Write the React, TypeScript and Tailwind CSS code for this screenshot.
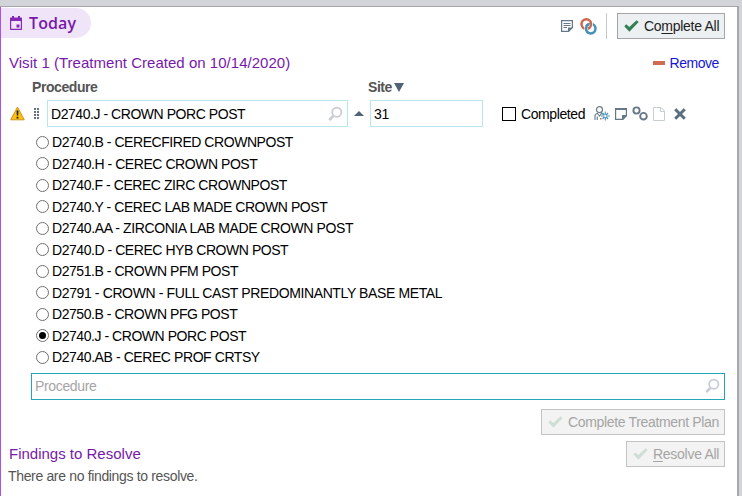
import React from "react";

const procedures: { label: string; spacing: string }[] = [
  { label: "D2740.B - CERECFIRED CROWNPOST", spacing: "tracking-[-0.45px]" },
  { label: "D2740.H - CEREC CROWN POST", spacing: "tracking-[-0.45px]" },
  { label: "D2740.F - CEREC ZIRC CROWNPOST", spacing: "tracking-[-0.44px]" },
  { label: "D2740.Y - CEREC LAB MADE CROWN POST", spacing: "tracking-[-0.44px]" },
  { label: "D2740.AA - ZIRCONIA LAB MADE CROWN POST", spacing: "tracking-[-0.4px]" },
  { label: "D2740.D - CEREC HYB CROWN POST", spacing: "tracking-[-0.45px]" },
  { label: "D2751.B - CROWN PFM POST", spacing: "tracking-[-0.45px]" },
  { label: "D2791 - CROWN - FULL CAST PREDOMINANTLY BASE METAL", spacing: "tracking-[-0.38px]" },
  { label: "D2750.B - CROWN PFG POST", spacing: "tracking-[-0.45px]" },
  { label: "D2740.J - CROWN PORC POST", spacing: "tracking-[-0.45px]" },
  { label: "D2740.AB - CEREC PROF CRTSY", spacing: "tracking-[-0.42px]" },
];

function Check({ color }: { color: string }) {
  return (
    <svg width="15" height="12" viewBox="0 0 15 12" className="shrink-0">
      <path d="M0.3 6.3 2.3 4.3 5.3 7 12.6 0.3 14.7 2 5.4 11.7Z" fill={color} />
    </svg>
  );
}

function SearchIcon() {
  return (
    <svg width="15" height="16" viewBox="0 0 15 16" fill="none" stroke="#c8ccd4" className="shrink-0">
      <circle cx="8.8" cy="6.2" r="4.6" strokeWidth="1.8" />
      <path d="M5.2 10 1.3 14.2" strokeWidth="2.6" />
    </svg>
  );
}

function CalendarIcon() {
  return (
    <svg width="12" height="14" viewBox="0 0 12 14" className="shrink-0" fill="#8528b8">
      <path d="M2 0h2v1.5h4V0h2v1.5h1.2q.8 0 .8.8V13.2q0 .8-.8.8H.8q-.8 0-.8-.8V2.3q0-.8.8-.8H2ZM1.2 5v7.8h9.6V5Z" fillRule="evenodd" />
      <path d="M6.5 8.5h3v3h-3z" />
    </svg>
  );
}

function NoteIcon() {
  return (
    <svg width="12" height="12" viewBox="0 0 12 12" className="shrink-0">
      <path d="M.6.6h10.8v6.9L7.5 11.4H.6Z" fill="none" stroke="#65788a" strokeWidth="1.2" />
      <path d="M7 7.5h5L7.5 12H7Z" fill="#65788a" />
      <path d="M2.5 3.5h7M2.5 5.5h7M2.5 7.5h3.5" stroke="#65788a" />
    </svg>
  );
}

function LinkIcon() {
  return (
    <svg width="17" height="17" viewBox="0 0 17 17" fill="none" strokeWidth="2.5" className="shrink-0">
      <circle cx="10.7" cy="10.6" r="4.8" stroke="#4690b8" />
      <path d="M11.2 3.5a5 5 0 0 1-.5 4.5" stroke="#fff" strokeWidth="3.2" />
      <circle cx="6.3" cy="6.1" r="4.8" stroke="#cf6650" />
      <path d="M6.9 13.5A4.8 4.8 0 0 1 6.3 8.6" stroke="#fff" strokeWidth="3.4" />
      <path d="M8 14.57A4.8 4.8 0 0 1 8.3 6.44" stroke="#4690b8" />
    </svg>
  );
}

function PersonStarIcon() {
  return (
    <svg width="16" height="15" viewBox="0 0 16 15" fill="none" className="shrink-0">
      <circle cx="5.5" cy="3.7" r="3" stroke="#71808e" strokeWidth="1.3" />
      <path d="M1 14V10q0-2 2.8-3M7.2 7l1.8 1.2M3.3 14V10.5M3.5 7.5 5.5 10l2-2.5" stroke="#71808e" strokeWidth="1.2" />
      <path d="M11.3 5.5v9M7 10h8.8M8.500 7l5.600 6M14.100 7l-5.600 6" stroke="#4690b8" strokeWidth="1.1" />
      <circle cx="11.3" cy="10" r="1.2" fill="#fff" />
      <path d="M6 12h1.5v1.5H6z" fill="#c96a55" />
    </svg>
  );
}

function StickyIcon() {
  return (
    <svg width="12" height="12" viewBox="0 0 12 12" className="shrink-0">
      <path d="M.6 1h10.8v6.5L7.5 11.4H.6Z" fill="none" stroke="#65788a" strokeWidth="1.2" />
      <path d="M0 0h12v2H0zM7 7h5v1l-4 4H7Z" fill="#65788a" />
    </svg>
  );
}

function RingsIcon() {
  return (
    <svg width="16" height="15" viewBox="0 0 16 15" fill="none" stroke="#65788a" strokeWidth="1.9" className="shrink-0">
      <circle cx="4.5" cy="4.5" r="3.1" />
      <circle cx="11.5" cy="10.2" r="3.3" />
    </svg>
  );
}

function PageIcon() {
  return (
    <svg width="12" height="14" viewBox="0 0 12 14" fill="none" stroke="#c8cdd3" className="shrink-0">
      <path d="M.5.5h7.5l3.5 3.5v9.5H.5ZM7.5.5v4h4" />
    </svg>
  );
}

function CloseIcon() {
  return (
    <svg width="12" height="12" viewBox="0 0 12 12" stroke="#5a6e81" strokeWidth="3" className="shrink-0">
      <path d="m1.2 1.2 9.6 9.6M10.8 1.2l-9.6 9.6" />
    </svg>
  );
}

function WarningIcon() {
  return (
    <svg width="15" height="15" viewBox="0 0 15 15" className="shrink-0">
      <path d="M7.5 1 14.3 13.8H.7Z" fill="#fcc010" stroke="#cf921c" strokeLinejoin="round" />
      <path d="M6.5 4.5h2L8.2 9.5H6.8ZM6.6 10.7h1.8v1.8H6.6z" fill="#222" />
    </svg>
  );
}

function DragHandle() {
  return (
    <div className="grid w-[5px] grid-cols-2 gap-px">
      {Array.from({ length: 8 }, (_, i) => (
        <span key={i} className="h-[2px] w-[2px] bg-[#63707d]" />
      ))}
    </div>
  );
}

export default function App() {
  return (
    <div className="h-[496px] w-[742px] overflow-hidden bg-[#d3d4da] pt-[6px] font-['Liberation_Sans',Arial,sans-serif] text-[14px] leading-4 text-black">
      <main className="h-[490px] w-[739px] border-t border-r-2 border-t-[#a6a6a9] border-r-[#a8a8ac] bg-white">
        <div className="h-full border-l border-[#a84ff5] pt-px">
          <header className="flex h-[32px] items-start">
            <div className="flex h-[30px] w-[90px] items-center rounded-r-full bg-[#f0e4f8] pl-[9px]">
              <CalendarIcon />
              <h1 className="ml-[7px] font-['Open_Sans',sans-serif] text-[16px] leading-5 font-semibold tracking-[0.1px] text-[#7719aa]">Today</h1>
            </div>
            <div className="mt-[5px] ml-[470px] flex h-[26px] items-center">
              <NoteIcon />
              <span className="ml-[7px] flex"><LinkIcon /></span>
              <span className="ml-[9px] h-[26px] w-px bg-[#c8c8c8]" />
            </div>
            <button className="mt-[5px] ml-[10px] flex h-[26px] w-[108px] items-center border border-[#a5a5a5] bg-[#edf0f2] pl-[6px] tracking-[-0.28px] text-[#222]">
              <Check color="#318055" />
              <span className="ml-[5px] whitespace-nowrap">Co<u className="underline-offset-2">m</u>plete All</span>
            </button>
          </header>

          <div className="mt-[13px] flex h-[20px] items-center pl-[8px]">
            <h2 className="w-[644px] text-[15px] tracking-[0.025px] whitespace-nowrap text-[#7719aa]">Visit 1 (Treatment Created on 10/14/2020)</h2>
            <span className="h-[4px] w-[12px] bg-[#cf6a54]" />
            <a className="ml-[4.5px] tracking-[-0.45px] text-[#1616d8]">Remove</a>
          </div>

          <div className="mt-[5px] flex h-[18px] items-center pl-[31px] font-bold tracking-[-0.43px] text-[#555]">
            <span className="w-[336px]">Procedure</span>
            <span>Site</span>
            <svg width="10" height="9" className="ml-[2px]"><path d="M0 0h10L5 9Z" fill="#4d6377" /></svg>
          </div>

          <div className="mt-[4px] flex h-[27px] items-center pl-[9px]">
            <WarningIcon />
            <span className="ml-[9px] w-[13px]"><DragHandle /></span>
            <div className="flex h-[27px] w-[301px] items-center border border-[#b7e7ec] pr-[4px] pl-[3px]">
              <span className="flex-1 tracking-[-0.45px]">D2740.J - CROWN PORC POST</span>
              <SearchIcon />
            </div>
            <svg width="10" height="5" className="ml-[6px] shrink-0"><path d="M0 5h10L5 0Z" fill="#4d6377" /></svg>
            <div className="ml-[6px] flex h-[27px] w-[113px] items-center border border-[#b7e7ec] pl-[3px] tracking-[-0.4px]">31</div>
            <span className="ml-[19px] h-[14px] w-[14px] border border-black" />
            <span className="ml-[5px] w-[73px] tracking-[-0.4px]">Completed</span>
            <PersonStarIcon />
            <span className="ml-[5px]"><StickyIcon /></span>
            <span className="ml-[5px]"><RingsIcon /></span>
            <span className="ml-[5px]"><PageIcon /></span>
            <span className="ml-[9px]"><CloseIcon /></span>
          </div>

          <ul className="mt-[4.5px] pl-[35px]">
            {procedures.map((p, i) => (
              <li key={p.label} className="flex h-[21.5px] items-center">
                <span className="flex h-[13px] w-[13px] shrink-0 items-center justify-center rounded-full border border-[#707070] bg-white">
                  {i === 9 && <span className="h-[7px] w-[7px] rounded-full bg-black" />}
                </span>
                <span className={`ml-[3px] whitespace-nowrap ${p.spacing}`}>{p.label}</span>
              </li>
            ))}
          </ul>

          <div className="mt-[4.5px] ml-[30px] flex h-[27px] w-[694px] items-center border border-[#24a5bb] pr-[4px] pl-[3px] tracking-[-0.35px] text-[#a5a5a5]">
            <span className="flex-1">Procedure</span>
            <SearchIcon />
          </div>

          <div className="mt-[9px] flex h-[26px] justify-end pr-[12px]">
            <button className="flex w-[184px] items-center border border-[#c3c3c3] bg-[#f3f3f3] pl-[6px] tracking-[-0.34px] whitespace-nowrap text-[#a5a5a5]">
              <Check color="#cfdfd6" />
              <span className="ml-[5px]">Complete Treatment Plan</span>
            </button>
          </div>

          <div className="mt-[6px] flex h-[26px] items-center justify-between pr-[12px] pl-[8px]">
            <h2 className="text-[15px] text-[#7719aa]">Findings to Resolve</h2>
            <button className="flex h-[26px] w-[99px] items-center border border-[#c3c3c3] bg-[#f3f3f3] pl-[6px] tracking-[-0.28px] whitespace-nowrap text-[#a5a5a5]">
              <Check color="#cfdfd6" />
              <span className="ml-[5px]"><u className="underline-offset-2">R</u>esolve All</span>
            </button>
          </div>
          <p className="mt-px pl-[7px] tracking-[-0.34px] text-[#555]">There are no findings to resolve.</p>
        </div>
      </main>
    </div>
  );
}
